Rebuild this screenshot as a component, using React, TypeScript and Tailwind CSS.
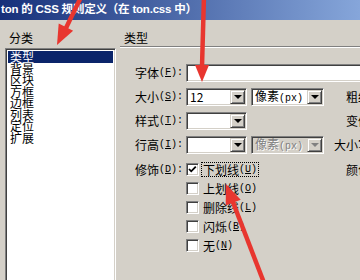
import React from 'react';

const sunken =
  'border border-t-[#808080] border-l-[#808080] border-b-white border-r-white shadow-[inset_1px_1px_0_#404040,inset_-1px_-1px_0_#d4d0c8]';
const raised =
  'border border-t-[#d4d0c8] border-l-[#d4d0c8] border-b-[#404040] border-r-[#404040] shadow-[inset_1px_1px_0_#fff,inset_-1px_-1px_0_#808080]';

// Chinese text followed by a half-width mnemonic like (F):
const Lbl = ({ zh, k, colon = true }: { zh: string; k: string; colon?: boolean }) => (
  <span className="inline-flex items-center whitespace-nowrap">
    <span>{zh}</span>
    <span className="font-['Liberation_Mono',monospace] text-[10px] leading-none">
      (<span className="underline">{k}</span>){colon ? ':' : ''}
    </span>
  </span>
);

const DropBtn = ({ disabled = false }: { disabled?: boolean }) => (
  <div className={`w-[15px] h-[14px] flex items-center justify-center bg-[#d4d0c8] ${raised}`}>
    <div
      className={`w-0 h-0 border-x-[4px] border-x-transparent border-t-[4px] ${
        disabled ? 'border-t-[#808080]' : 'border-t-black'
      }`}
    />
  </div>
);

const Select = ({ w, children, disabled = false }: { w: string; children?: React.ReactNode; disabled?: boolean }) => (
  <div
    className={`${w} h-[18px] flex items-center justify-between pl-[3px] pr-[1px] ${sunken} ${
      disabled ? 'bg-[#d4d0c8] text-[#808080] [text-shadow:1px_1px_0_#fff]' : 'bg-white text-black'
    }`}
  >
    <span className="whitespace-nowrap leading-none">{children}</span>
    <DropBtn disabled={disabled} />
  </div>
);

const Unit = ({ disabled = false }: { disabled?: boolean }) => (
  <Select w="w-[73px] ml-[4px]" disabled={disabled}>
    像素<span className="font-['Liberation_Mono',monospace] text-[10px]">(px)</span>
  </Select>
);

const RightLbl = ({ children }: { children?: React.ReactNode }) => (
  <div className="w-[70px] shrink-0 flex justify-end">{children}</div>
);

const Check = ({ checked = false }: { checked?: boolean }) => (
  <div className={`w-[13px] h-[13px] shrink-0 bg-white flex items-center justify-center ${sunken}`}>
    {checked && (
      <svg width="9" height="9" viewBox="0 0 9 9">
        <polyline points="1,4 3.2,6.3 7.8,1.6" fill="none" stroke="#000" strokeWidth="1.8" />
      </svg>
    )}
  </div>
);

const decorations = [
  { zh: '下划线', k: 'U', checked: true },
  { zh: '上划线', k: 'O' },
  { zh: '删除线', k: 'L' },
  { zh: '闪烁', k: 'B' },
  { zh: '无', k: 'N' },
];

const categories = ['类型', '背景', '区块', '方框', '边框', '列表', '定位', '扩展'];

export default function App() {
  return (
    <div className="relative w-[360px] h-[280px] overflow-hidden bg-[#d4d0c8] text-[12px] text-black font-['Noto_Sans_CJK_SC',sans-serif]">
      {/* Title bar */}
      <div className="h-[20px] flex items-center pl-[1px] bg-[linear-gradient(90deg,#16307a,#86a6da)] text-white font-bold text-[11.5px] tracking-[-0.2px] whitespace-nowrap font-['Liberation_Sans','Noto_Sans_CJK_SC',sans-serif]">
        ton 的 CSS 规则定义（在 ton.css 中）
      </div>

      <div className="flex pt-[11px]">
        {/* Category list */}
        <div className="w-[120px] shrink-0 pl-[5px]">
          <div className="h-[14px] leading-[14px] pl-[4px]">分类</div>
          <div className={`mt-[3px] w-[111px] h-[260px] bg-white p-[2px] ${sunken}`}>
            {categories.map((c, i) => (
              <div
                key={c}
                className={`h-[11.5px] leading-[11.5px] pl-[2px] ${i === 0 ? 'bg-[#0a246a] text-white' : ''}`}
              >
                {c}
              </div>
            ))}
          </div>
        </div>

        {/* Type panel */}
        <div className="w-[300px] shrink-0">
          <div className="h-[14px] leading-[14px] pl-[4px]">类型</div>
          <div className="mt-[1px] border-t border-t-[#808080] border-b border-b-white" />

          <div className="mt-[16px] pl-[15px] flex flex-col gap-[6px]">
            <div className="h-[18px] flex items-center">
              <div className="w-[51px] shrink-0"><Lbl zh="字体" k="F" /></div>
              <div className={`w-[240px] h-[18px] shrink-0 bg-white ${sunken}`} />
            </div>

            <div className="h-[18px] flex items-center">
              <div className="w-[51px] shrink-0"><Lbl zh="大小" k="S" /></div>
              <Select w="w-[61px]">12</Select>
              <Unit />
              <RightLbl><Lbl zh="粗细" k="W" /></RightLbl>
            </div>

            <div className="h-[18px] flex items-center">
              <div className="w-[51px] shrink-0"><Lbl zh="样式" k="T" /></div>
              <Select w="w-[61px]" />
              <div className="w-[77px] shrink-0" />
              <RightLbl><Lbl zh="变体" k="V" /></RightLbl>
            </div>

            <div className="h-[18px] flex items-center">
              <div className="w-[51px] shrink-0"><Lbl zh="行高" k="I" /></div>
              <Select w="w-[61px]" />
              <Unit disabled />
              <RightLbl><Lbl zh="大小写" k="E" /></RightLbl>
            </div>

            <div className="flex items-start">
              <div className="w-[51px] h-[19px] shrink-0 flex items-center"><Lbl zh="修饰" k="D" /></div>
              <div className="w-[138px] shrink-0 flex flex-col">
                {decorations.map((d) => (
                  <div key={d.k} className="h-[19px] flex items-center">
                    <Check checked={d.checked} />
                    {d.checked ? (
                      <span className="ml-[2px] px-[1px] border border-dotted border-black leading-[13px]">
                        <Lbl zh={d.zh} k={d.k} colon={false} />
                      </span>
                    ) : (
                      <span className="ml-[4px]"><Lbl zh={d.zh} k={d.k} colon={false} /></span>
                    )}
                  </div>
                ))}
              </div>
              <div className="h-[19px] flex items-center">
                <RightLbl><Lbl zh="颜色" k="C" /></RightLbl>
              </div>
            </div>
          </div>
        </div>
      </div>

      {/* Red annotation arrows */}
      <svg className="absolute inset-0 pointer-events-none" width="360" height="280" viewBox="0 0 360 280">
        <g fill="#e8362f" stroke="#e8362f">
          <line x1="82" y1="-5" x2="66" y2="28" strokeWidth="4.5" />
          <polygon points="57,45 73.1,30.7 58.7,23.5" strokeWidth="0" />
          <line x1="204" y1="-5" x2="202" y2="67" strokeWidth="4.5" />
          <polygon points="202,82 195,65 209,65" strokeWidth="0" />
          <line x1="266" y1="288" x2="232.5" y2="201" strokeWidth="4.5" />
          <polygon points="226,184 240.7,199.8 225.7,205.6" strokeWidth="0" />
        </g>
      </svg>
    </div>
  );
}
